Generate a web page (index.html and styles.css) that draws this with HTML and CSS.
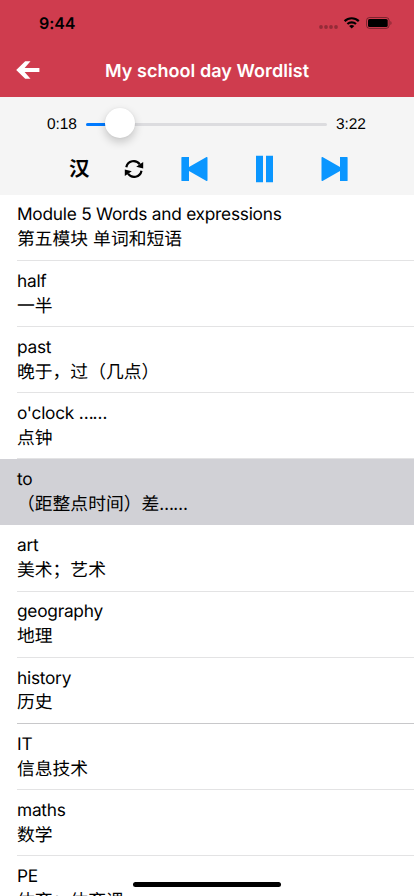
FILE: index.html
```html
<!DOCTYPE html>
<html lang="zh-CN">
<head>
<meta charset="utf-8">
<meta name="viewport" content="width=device-width, initial-scale=1">
<title>My school day Wordlist</title>
<link rel="stylesheet" href="styles.css">
</head>
<body>
<div class="app">
  <header class="header">
    <div class="status">
      <span class="clock">9:44</span>
      <svg class="status-icons" width="74" height="16" viewBox="0 0 74 16">
        <g opacity=".28"><circle cx="2" cy="12" r="1.9"/><circle cx="7" cy="12" r="1.9"/><circle cx="12" cy="12" r="1.9"/><circle cx="17" cy="12" r="1.9"/></g>
        <g fill="none" stroke="#000" stroke-width="2.2"><path d="M25.6 6.1a10.3 10.3 0 0 1 14.2 0"/><path d="M28.4 9a6.3 6.3 0 0 1 8.6 0"/></g>
        <path d="M30.1 11a4 4 0 0 1 5.2 0l-2.6 2.6z"/>
        <rect x="47.5" y="2.5" width="22.6" height="10.9" rx="3" fill="none" stroke="#000" stroke-opacity=".4"/>
        <rect x="49" y="4" width="19.7" height="8" rx="1.6"/>
        <path d="M71.5 6v4c1.3-.5 1.3-3.5 0-4z" opacity=".45"/>
      </svg>
    </div>
    <div class="nav">
      <svg class="back" width="24" height="18" viewBox="0 0 24 18"><path d="M23.4 7H8.6L14.5 .2H9.2L.2 9l9 8.7h5.3L8.6 11h14.8z" fill="#fff"/></svg>
      <h1 class="title">My school day Wordlist</h1>
    </div>
  </header>
  <section class="player">
    <div class="progress">
      <span class="time">0:18</span>
      <div class="track"><div class="played"></div><div class="thumb"></div></div>
      <span class="time">3:22</span>
    </div>
    <div class="controls">
      <span class="lang">汉</span>
      <svg class="loop" width="20" height="20" viewBox="0 0 20 20"><g fill="none" stroke="#000" stroke-width="2.2"><path d="M2.3 8.2A7.5 7.5 0 0 1 15.8 5.3"/><path d="M17.5 11.8A7.5 7.5 0 0 1 4 14.7"/></g><path d="M19.2 3v6.5l-7-1.8zM.8 17v-6.500l7 1.8z"/></svg>
      <svg class="prev" width="27" height="26" viewBox="0 0 27 26"><path d="M1 1h7v10L25.5 1q1-.4 1 .7v22.6q0 1.1-1 .7L8 15v10H1q-.6 0-.6-.6V1.6Q.4 1 1 1z"/></svg>
      <svg class="pause" width="17" height="28" viewBox="0 0 17 28"><path d="M0 .7h7v26.6H0zM10 .7h7v26.6h-7z"/></svg>
      <svg class="next" width="27" height="26" viewBox="0 0 27 26"><path d="M26 1h-7v10L1.5 1q-1-.4-1 .7v22.6q0 1.1 1 .7L19 15v10h7q.6 0 .6-.6V1.6q0-.6-.6-.6z"/></svg>
    </div>
  </section>
  <ul class="list">
    <li class="row"><div class="cell"><p class="en">Module 5 Words and expressions</p><p class="zh">第五模块 单词和短语</p></div></li>
    <li class="row"><div class="cell"><p class="en">half</p><p class="zh">一半</p></div></li>
    <li class="row"><div class="cell"><p class="en">past</p><p class="zh">晚于，过（几点）</p></div></li>
    <li class="row"><div class="cell"><p class="en">o'clock <span class="tight">……</span></p><p class="zh">点钟</p></div></li>
    <li class="row selected"><div class="cell"><p class="en">to</p><p class="zh">（距整点时间）差<span class="dots">……</span></p></div></li>
    <li class="row"><div class="cell"><p class="en">art</p><p class="zh">美术；艺术</p></div></li>
    <li class="row"><div class="cell"><p class="en">geography</p><p class="zh">地理</p></div></li>
    <li class="row"><div class="cell strong"><p class="en">history</p><p class="zh">历史</p></div></li>
    <li class="row"><div class="cell"><p class="en">IT</p><p class="zh">信息技术</p></div></li>
    <li class="row"><div class="cell"><p class="en">maths</p><p class="zh">数学</p></div></li>
    <li class="row"><div class="cell"><p class="en">PE</p><p class="zh">体育；体育课</p></div></li>
  </ul>
  <div class="home-bar"></div>
</div>
</body>
</html>
```
FILE: styles.css
```css
* { box-sizing: border-box; }
body, h1, p, ul { margin: 0; padding: 0; }
body { font-family: Inter, "Noto Sans CJK SC", sans-serif; color: #000; background: #fff; text-rendering: geometricPrecision; }
.app { position: relative; display: flex; flex-direction: column; width: 414px; height: 896px; overflow: hidden; }
.header { flex: none; height: 97px; background: #cf3c4e; }
.status { display: flex; justify-content: space-between; align-items: center; height: 44px; padding: 2px 21px 0 39px; }
.clock { font-size: 16px; font-weight: 600; letter-spacing: -.1px; }
.status-icons { flex: none; }
.nav { display: grid; grid-template-columns: 90px 1fr 90px; align-items: center; height: 53px; }
.back { margin: -1px 0 0 16px; }
.title { color: #fff; font-size: 18px; font-weight: 600; text-align: center; white-space: nowrap; letter-spacing: .06px; padding-top: 1px; }
.player { flex: none; height: 97.6px; background: #f5f5f5; }
.progress { display: flex; align-items: center; height: 54px; padding: 0 48px 0 47px; }
.time { flex: none; width: 30px; padding-top: 2px; font-family: "Liberation Sans", sans-serif; font-size: 15.5px; letter-spacing: -.1px; white-space: nowrap; }
.track { position: relative; flex: 1; height: 3px; margin: 0 9px; border-radius: 2px; background: #dcdcdf; }
.played { width: 30px; height: 3px; border-radius: 2px; background: #007aff; }
.thumb { position: absolute; left: 19px; top: -15px; width: 30px; height: 30px; border-radius: 50%; background: #fff; box-shadow: 0 4px 10px rgba(0, 0, 0, .2), 0 0 2px rgba(0, 0, 0, .06); }
.controls { display: flex; align-items: center; height: 36px; padding-left: 69px; fill: #0a96ff; }
.lang { width: 21px; font-size: 20.5px; font-weight: 700; line-height: 30px; }
.loop { margin-left: 34px; fill: #000; }
.prev { margin-left: 37px; }
.pause { margin-left: 48px; }
.next { margin-left: 48px; }
.list { flex: 1; list-style: none; }
.row { height: 66.17px; padding-left: 17px; }
.cell { height: 100%; padding-top: 8.9px; border-bottom: 1px solid #e3e3e4; }
.cell.strong { border-color: #c8c8ca; }
.selected { background: #d1d1d6; }
.selected .cell { border-color: transparent; }
.en { font-size: 17.3px; line-height: 24px; letter-spacing: -.25px; white-space: pre; }
.tight { letter-spacing: -1.2px; }
.zh { font-family: "Noto Sans CJK SC", sans-serif; font-size: 17.8px; line-height: 24px; margin-top: -1.1px; word-spacing: 1px; white-space: pre; }
.dots { font-family: Inter, sans-serif; font-size: 17px; letter-spacing: -.6px; }
.home-bar { position: absolute; left: 133px; bottom: 9px; width: 148px; height: 5px; border-radius: 3px; background: #000; }
```
